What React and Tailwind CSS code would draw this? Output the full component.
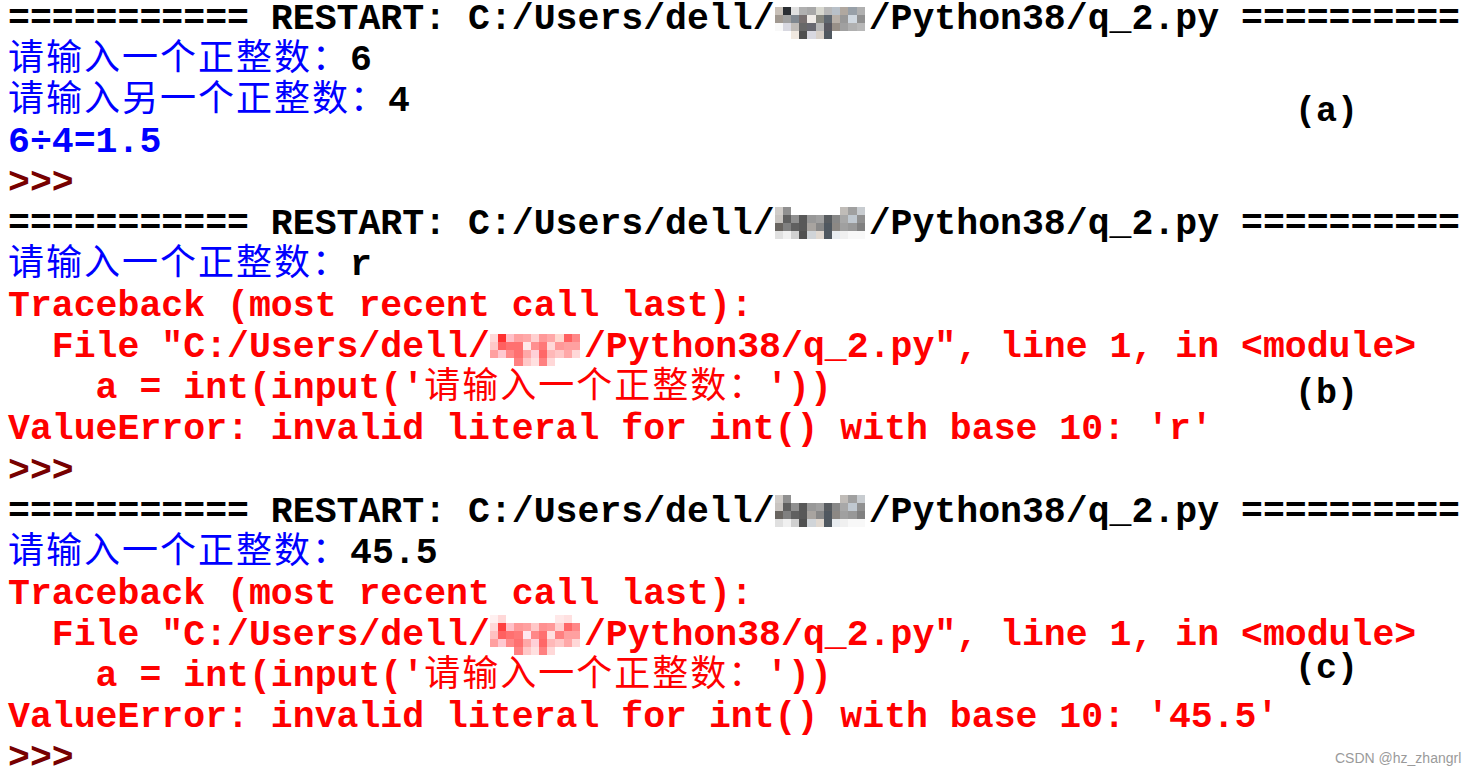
const W = '#ffffff'

const gray1 = [
  ['#c8c0b8', '#2a2e33', '#e0e0e0', '#b0b0b0', '#a8a8a8', '#d8d8d0', '#b8b8b8', '#b8c0c8', '#b0a8a0', '#98a0a8', '#b0b0b0'],
  ['#a09890', '#a0a0a0', '#808890', '#787070', '#f0ece8', '#888880', '#606870', '#b8b0a8', '#989898', '#d0d8e0', '#909090'],
  ['#f8f8f8', '#d8d8e0', '#c0bcb8', '#686868', '#686870', '#b8b8b8', '#585860', '#989088', '#a0a0a0', '#b0b0b0', '#b8b8b8'],
  [W, W, '#f0e8e0', '#505050', '#d8d8e0', '#d8d0c8', '#505860', W, W, W, W],
]

const gray2 = [
  ['#d0ccc8', '#909090', W, W, W, W, W, W, '#c0bcb8', '#a0a0a0', '#c8ccd0'],
  ['#c8c4c0', '#606060', '#909090', '#585858', '#989898', '#a0a0a0', '#585c60', '#888888', '#a8a8a8', '#c0c8d0', '#909090'],
  ['#686460', '#808080', '#606060', '#585858', '#a8a4a0', '#888888', '#505860', '#8c8884', '#a0a0a0', '#989898', '#808080'],
  ['#e0e0e0', '#f0f0f0', '#d0d0d0', '#505050', '#d0d4d8', '#e0d8d0', '#505860', '#e8ecf0', '#f0f0f0', '#f8f8f8', '#f8f8f8'],
]

const red1 = [
  ['#ffd8d8', '#ff3030', '#ffc0c8', '#ffa0a0', '#ffa8a8', '#ffd0d0', '#ff9898', '#ffa8a8', '#ffd8d0', '#ff6060', '#ff8888'],
  ['#ffc8c8', '#ff6060', '#ff7070', '#ff7070', '#ffe8e8', '#ff9090', '#ff7878', '#ffd8d8', '#ff9898', '#ffa0a0', '#ffa0a0'],
  ['#ffa0a0', '#ffc8d0', '#ff8888', '#ff7070', '#ffa8a8', '#ffd0d8', '#ff6868', '#ffb8b8', '#ffc8c8', '#ffa8a8', '#ffd8d8'],
  [W, W, W, '#ff8080', '#ffc8c8', '#ffe0e0', '#ff8080', '#ffd8d8', W, W, W],
]

const red2 = [
  ['#fff0f0', '#ffd8d8', W, W, W, W, W, W, '#ffe8e8', '#ffe0e0', W],
  ['#ffd8d8', '#ff4040', '#ffc0c8', '#ff9898', '#ffa0a0', '#ffc8c8', '#ff9090', '#ff9898', '#ffd0d0', '#ff6868', '#ff8888'],
  ['#ffc0c0', '#ff6060', '#ff7070', '#ff7878', '#ffe8f0', '#ff8888', '#ff7070', '#ffe0e0', '#ff8080', '#ffa0a0', '#ffa0a0'],
  ['#ffa0a0', '#ffc8d0', '#ff8888', '#ff7070', '#ffa8a8', '#ffd0d8', '#ff6868', '#ffb8b8', '#ffc8c8', '#ffa8a8', '#ffd8d8'],
  [W, W, W, '#ff8080', '#ffc8c8', '#ffe0e0', '#ff8080', '#ffd8d8', W, W, W],
]

function Mosaic({ rows, className }) {
  return (
    <span className={`inline-block h-[41px] w-[94px] align-top ${className}`}>
      <span className="grid grid-cols-[repeat(11,8.2px)] auto-rows-[8px]">
        {rows.flat().map((c, i) => (
          <span key={i} style={{ backgroundColor: c }} />
        ))}
      </span>
    </span>
  )
}

const Cjk = ({ children }) => (
  <span className="font-['Noto_Sans_CJK_SC',sans-serif] text-[36px] leading-[0px] font-normal tracking-[2px]">{children}</span>
)

const Line = ({ className = '', children }) => (
  <div className={`h-[41.06px] whitespace-pre leading-[41px] ${className}`}>{children}</div>
)

const Prompt = () => <Line className="text-[#770000]">{'>>> '}</Line>

function Restart({ rows, pad }) {
  return (
    <Line className="text-black">
      {'=========== RESTART: C:/Users/dell/'}
      <Mosaic rows={rows} className={pad} />
      {'/Python38/q_2.py =========='}
    </Line>
  )
}

function Trace({ rows, pad, value }) {
  return (
    <>
      <Line className="text-[#ff0000]">Traceback (most recent call last):</Line>
      <Line className="text-[#ff0000]">
        {'  File "C:/Users/dell/'}
        <Mosaic rows={rows} className={pad} />
        {'/Python38/q_2.py", line 1, in <module>'}
      </Line>
      <Line className="text-[#ff0000]">
        {"    a = int(input('"}
        <Cjk>请输入一个正整数：</Cjk>
        {"'))"}
      </Line>
      <Line className="text-[#ff0000]">{`ValueError: invalid literal for int() with base 10: '${value}'`}</Line>
    </>
  )
}

export default function App() {
  return (
    <div className="relative h-[775px] w-[1483px] overflow-hidden bg-white">
      <div className="-mt-px flex flex-col pl-[8px] font-['Liberation_Mono',monospace] text-[36.5px] font-bold">
        <Restart rows={gray1} pad="pt-[8px]" />
        <Line className="text-[#0000ff]">
          <Cjk>请输入一个正整数：</Cjk>
          <span className="text-black">6</span>
        </Line>
        <Line className="text-[#0000ff]">
          <Cjk>请输入另一个正整数：</Cjk>
          <span className="text-black">4</span>
        </Line>
        <Line className="text-[#0000ff]">6÷4=1.5</Line>
        <Prompt />

        <Restart rows={gray2} pad="pt-[3px]" />
        <Line className="text-[#0000ff]">
          <Cjk>请输入一个正整数：</Cjk>
          <span className="text-black">r</span>
        </Line>
        <Trace rows={red1} pad="pt-[7px]" value="r" />
        <Prompt />

        <Restart rows={gray2} pad="pt-[3px]" />
        <Line className="text-[#0000ff]">
          <Cjk>请输入一个正整数：</Cjk>
          <span className="text-black">45.5</span>
        </Line>
        <Trace rows={red2} pad="pt-[0px]" value="45.5" />
        <Prompt />
      </div>

      <span className="absolute left-[1295px] top-[95px] font-['Liberation_Mono',monospace] text-[35px] font-bold leading-[34px] text-black">(a)</span>
      <span className="absolute left-[1295px] top-[377px] font-['Liberation_Mono',monospace] text-[35px] font-bold leading-[34px] text-black">(b)</span>
      <span className="absolute left-[1295px] top-[652px] font-['Liberation_Mono',monospace] text-[35px] font-bold leading-[34px] text-black">(c)</span>

      <span className="absolute left-[1335px] top-[748px] font-['Liberation_Sans',sans-serif] text-[14px] text-[#9a9a9a]">CSDN @hz_zhangrl</span>
    </div>
  )
}
